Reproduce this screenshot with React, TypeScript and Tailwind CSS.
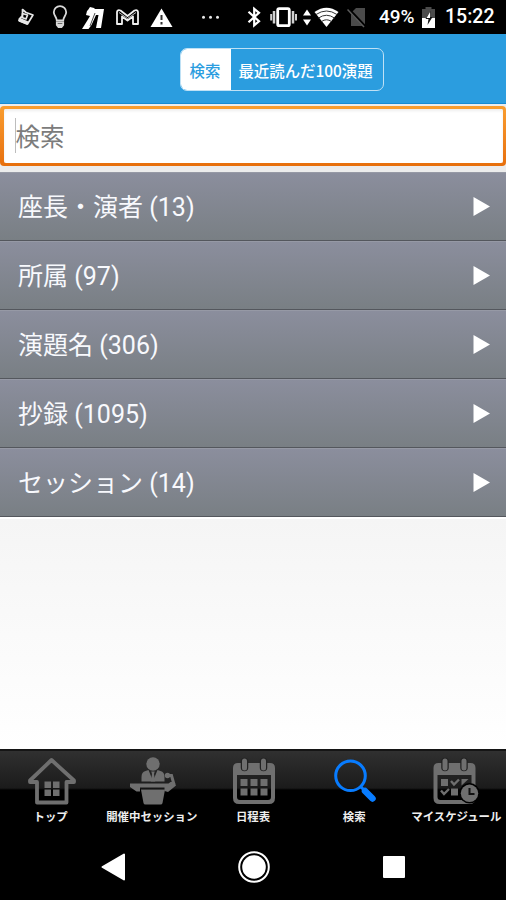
import type { ReactNode } from "react";
import clsx from "clsx";

const categories = [
  { name: "座長・演者", count: 13 },
  { name: "所属", count: 97 },
  { name: "演題名", count: 306 },
  { name: "抄録", count: 1095 },
  { name: "セッション", count: 14 },
];

const tabs: { label: string; icon: ReactNode }[] = [
  { label: "トップ", icon: <HouseIcon /> },
  { label: "開催中セッション", icon: <PodiumIcon /> },
  { label: "日程表", icon: <CalendarIcon /> },
  { label: "検索", icon: <SearchIcon /> },
  { label: "マイスケジュール", icon: <ScheduleIcon /> },
];

function StatusBar() {
  return (
    <div className="flex h-[34px] items-center bg-black font-['Roboto',sans-serif] text-white">
      {/* notifications */}
      <svg className="ml-[17px] shrink-0" width="18" height="34" fill="none" stroke="#e8e8e8" strokeWidth="1.7" strokeLinejoin="round">
        <path d="M5.5 17V9.500l3.500 3 7 2.500-5.500 9-8.500-3.500 2-3.500z" />
        <path d="M5.500 13.500l5 1.500-1.500 4-4-1.500z" />
        <path d="M2.500 18.500l8 3.500-.5 2-7.500-3z" fill="#e8e8e8" />
      </svg>
      <svg className="ml-[17px] shrink-0" width="16" height="34" fill="none" stroke="#d8d8d8" strokeWidth="1.8">
        <path d="M4.8 20.500c0-3-3-5-3-8.300a6.200 6 0 0 1 12.400 0c0 3.300-3 5.300-3 8.300z" />
        <path d="M4.800 22.500h6.400v2.500l-1.700 2H6.500l-1.700-2zM5 25h6" />
      </svg>
      <svg className="ml-[14px] shrink-0" width="22" height="34" fill="#fff">
        <path d="M6 10l2-3 4 1 1 1h9l-3 19h-5l2.500-13h-2.500l-4.500 10-3 4H0l5-8 3-5-4-1 1-4z" />
        <path d="M13 13l-5 13" stroke="#000" strokeWidth=".7" />
      </svg>
      <svg className="ml-[12px] shrink-0" width="23" height="34" fill="none" stroke="#f0f0f0" strokeWidth="1.8" strokeLinejoin="round">
        <path d="M1 24V12q.5-2.500 3.500-1.500l7 5.500 7-5.500q3-1 3.500 1.500v12h-5v-7.500l-5.500 4-5.500-4V24z" />
        <path d="M3 12.500l8.500 6 8.500-6" strokeWidth=".8" />
      </svg>
      <svg className="ml-[11px] shrink-0" width="23" height="34">
        <path d="M11.500 8.500L22.500 27H.5z" fill="#fff" />
        <path d="M11.500 15v5M11.500 22v2.500" stroke="#333" strokeWidth="2" />
      </svg>
      <svg className="ml-[28px] shrink-0" width="20" height="34" fill="#e8e8e8">
        <circle cx="2.500" cy="17.300" r="1.500" />
        <circle cx="9.500" cy="17.300" r="1.500" />
        <circle cx="16.500" cy="17.300" r="1.500" />
      </svg>

      {/* system */}
      <svg className="ml-[26px] shrink-0" width="15" height="34" fill="none" stroke="#fff" strokeWidth="2.2">
        <path d="M1.500 11.800l10.500 9.500-4.800 4V8.800l4.800 4-10.500 9.500" />
      </svg>
      <svg className="ml-[8px] shrink-0" width="28" height="34">
        <rect x="7.700" y="8.700" width="11.600" height="17" rx="1.500" fill="none" stroke="#fff" strokeWidth="2.800" />
        <path d="M4 11v12.500M23 11v12.500" stroke="#d0d0d0" strokeWidth="2.500" />
        <path d="M1.200 14v6.500M26 14v6.500" stroke="#d0d0d0" strokeWidth="2" />
      </svg>
      <svg className="ml-[5px] shrink-0" width="8" height="34" fill="#fff">
        <path d="M4 9.500l4 6H0zM4 25.500l4-6H0z" />
      </svg>
      <svg className="ml-[3px] shrink-0" width="25" height="34">
        <path d="M.5 12Q12.500 3.500 24.500 12L12.500 27z" fill="#fff" />
        <path d="M2 14.500q10.500-7 21 0M4.500 18q8-5.500 16 0M7.500 21.500q5-3.500 10 0" fill="none" stroke="#333" strokeWidth="1" />
      </svg>
      <svg className="ml-[8px] shrink-0" width="21" height="34">
        <path d="M4 13l5-5h9v18H4z" fill="#4b4b4b" />
        <path d="M1 8.500l17.500 18.500" stroke="#000" strokeWidth="3" />
        <path d="M.5 9.500L17 27" stroke="#5c5c5c" strokeWidth="1.500" />
      </svg>
      <span className="ml-[11px] w-[38px] text-[19px] leading-[38px] font-medium">49%</span>
      <svg className="ml-[4px] shrink-0" width="15" height="34">
        <path d="M1 9h3.500V7h6v2H14v19H1z" fill="#4b4b4b" />
        <path d="M1 18h13v10H1z" fill="#fff" />
        <path d="M9.500 11l-5 8h3l-1 6 5-8h-3z" fill="#111" />
        <path d="M9 12l-3.500 6H9z" fill="#fff" />
      </svg>
      <span className="ml-[9px] text-[19.5px] leading-[38px] font-medium">15:22</span>
    </div>
  );
}

function HouseIcon() {
  return (
    <svg width="50" height="50" fill="none" stroke="#6f6f6f" strokeWidth="3.800" strokeLinejoin="round">
      <path d="M25.500 4L4 24.500v1.500h7v20.500h29.500V26H48v-1.500z" />
      <path d="M18.500 25.500h6.500v6.500h-6.500zM27 25.500h6.500v6.500H27zM18.500 33.500h6.500v6.500h-6.500zM27 33.500h6.500v6.500H27z" fill="#6f6f6f" stroke="none" />
    </svg>
  );
}

function PodiumIcon() {
  return (
    <svg width="50" height="50" fill="#6f6f6f">
      <circle cx="26" cy="8" r="6.700" />
      <path d="M14.500 25.500V21q0-5 4-6l3-1L26 25l4.500-11 3 1q4 1 4 6v4.500z" />
      <path d="M24.200 15.500h3.600L27 18l1.200 7.500h-4.400L25 18z" />
      {/* microphone arm */}
      <path d="M39.500 19.500h5l2.500 9" fill="none" stroke="#6f6f6f" strokeWidth="3" />
      <circle cx="40.500" cy="19.500" r="2.700" />
      <path d="M3 27.500h38.500l2-1.500h4l1.500 3.500-3 2.500-5 4-3.500-1v-3.500H13v4H9.500L3 31z" />
      <path d="M14 33.500h24l-2.500 13.500q-.3 1.500-2 1.500H18.500q-1.700 0-2-1.500z" />
    </svg>
  );
}

function CalendarFrame() {
  return (
    <>
      <path d="M10 7h32q5 0 5 5v30q0 6-6 6H11q-6 0-6-6V12q0-5 5-5zM9 19v22q0 3 3 3h28q3 0 3-3V19z" fill="#6f6f6f" fillRule="evenodd" />
      <path d="M16.500 5.500v6M35.500 5.500v6" stroke="#222" strokeWidth="7.500" strokeLinecap="round" />
      <path d="M16.500 5v7M35.500 5v7" stroke="#6f6f6f" strokeWidth="5" strokeLinecap="round" />
    </>
  );
}

function CalendarIcon() {
  return (
    <svg width="50" height="50">
      <CalendarFrame />
      <path d="M12.500 23h7v7h-7zM22.500 23h7v7h-7zM32.500 23h7v7h-7zM12.500 32.500h7v7h-7zM22.500 32.500h7v7h-7zM32.500 32.500h7v7h-7z" fill="#6f6f6f" />
    </svg>
  );
}

function SearchIcon() {
  return (
    <svg width="50" height="50" fill="none" stroke="#087cff">
      <circle cx="21.500" cy="19.800" r="14.800" strokeWidth="3" />
      <path d="M32 31l3 3" strokeWidth="3" />
      <path d="M36 35l7.500 7.500" strokeWidth="6.500" strokeLinecap="round" />
    </svg>
  );
}

function ScheduleIcon() {
  return (
    <svg width="50" height="50" className="overflow-visible">
      <g transform="translate(-1.500 0)">
        <CalendarFrame />
        <path d="M12.500 23h7v7h-7zM22.500 32.500h7v7h-7zM33 23h7l-7 6.500z" fill="#6f6f6f" />
        <path d="M22.500 25l3 3.500 5-5M12.500 34.500l3 3.500 5-5" fill="none" stroke="#6f6f6f" strokeWidth="2.400" />
        <circle cx="41" cy="37.300" r="10.300" fill="#000" />
        <circle cx="41" cy="37.300" r="8.700" fill="#6f6f6f" />
        <path d="M41 32v6h5" fill="none" stroke="#111" strokeWidth="2" />
      </g>
    </svg>
  );
}

function SegmentedControl() {
  return (
    <header className="flex h-[70px] justify-center border-b border-[#168bd3] bg-[#2b9ddf] pt-[14px]">
      <div className="ml-[57px] flex h-[43px] w-[204px] overflow-hidden rounded-[7px] border border-[#bfe1f5] text-[15.400px] leading-[40px] font-medium">
        <button type="button" className="w-[50px] shrink-0 bg-white pr-px text-[#2b9ddf]">検索</button>
        <button type="button" className="grow pr-[2px] whitespace-nowrap text-white">最近読んだ100演題</button>
      </div>
    </header>
  );
}

export default function App() {
  return (
    <div className="flex h-[900px] w-[506px] flex-col overflow-hidden bg-white font-['Noto_Sans_CJK_JP',sans-serif]">
      <StatusBar />
      <SegmentedControl />

      <div className="h-[68px] bg-[#ececec] pt-[1.500px]">
        <div className="h-[60px] rounded-[4px] bg-linear-to-b from-[#f99d2f] to-[#e76f0b] px-[3.500px] py-[3px]">
          <div className="flex h-full items-center rounded-[2px] bg-white pl-[11px] shadow-[inset_0_2px_3px_#eeeeee]">
            <span className="h-[35px] w-px bg-[#bdbdbd]" />
            <span className="text-[24.500px] leading-[30px] text-[#7c7c7c]">検索</span>
          </div>
        </div>
      </div>

      <ul>
        {categories.map((category) => (
          <li
            key={category.name}
            className="flex h-[69px] items-center justify-between border-t border-b border-t-[#9699a5] border-b-[#54575d] bg-linear-to-b from-[#8b8e9d] to-[#797f84] pr-[16px] pl-[18px] font-['Roboto','Noto_Sans_CJK_JP',sans-serif] text-[25px] leading-[34px] text-[#f8f9fd]"
          >
            <span className="pt-[3px]">
              {category.name} ({category.count})
            </span>
            <svg width="17" height="19" fill="#fff">
              <path d="M.5 0L17 9.500.5 19z" />
            </svg>
          </li>
        ))}
      </ul>

      <div className="grow border-t-2 border-white bg-linear-to-b from-[#f5f5f5] to-white" />

      <nav className="flex h-[85px] flex-col border-t-2 border-[#151515] bg-[linear-gradient(#303030_0,#1b1b1b_37px,#000_39px)]">
        <div className="flex">
          {tabs.map((tab, index) => (
            <div key={tab.label} className="flex w-[101.200px] shrink-0 flex-col items-center pt-[5px]">
              {tab.icon}
              <span
                className={clsx(
                  "text-[11.400px] leading-[20px] font-bold whitespace-nowrap text-[#eeeeee]",
                  index === 4 && "ml-[2px]",
                )}
              >
                {tab.label}
              </span>
            </div>
          ))}
        </div>
      </nav>

      {/* system navigation */}
      <div className="flex h-[66px] items-center justify-between bg-black px-[101px]">
        <svg width="24" height="32" fill="#fff" stroke="#fff" strokeWidth="2" strokeLinejoin="round">
          <path d="M1.500 16L23 3.500v25z" />
        </svg>
        <svg width="32" height="32">
          <circle cx="16" cy="16" r="14.800" fill="none" stroke="#fff" strokeWidth="2" />
          <circle cx="16" cy="16" r="11.800" fill="#fff" />
        </svg>
        <div className="size-[22px] rounded-[1px] bg-white" />
      </div>
    </div>
  );
}
